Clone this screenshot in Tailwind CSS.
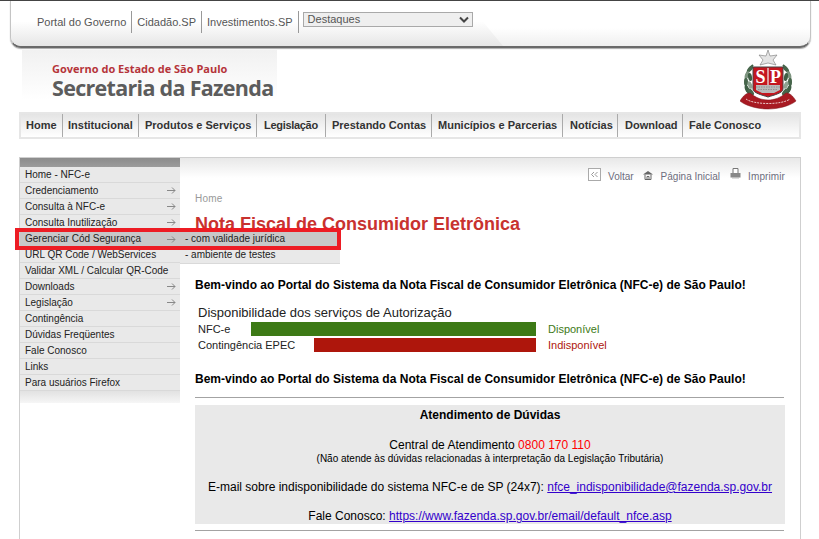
<!DOCTYPE html>
<html lang="pt-BR">
  <head>
    <meta charset="UTF-8" />
    <title>Nota Fiscal de Consumidor Eletrônica</title>
    <script src="https://cdn.jsdelivr.net/npm/@tailwindcss/browser@4"></script>
  </head>
  <body class="bg-white font-['Liberation_Sans',Arial,sans-serif] text-[10px] text-black">
    <div class="relative w-[819px] h-[539px] overflow-hidden border-t border-[#444]">
      <!-- Top bar -->
      <div class="relative ml-[10px] w-[801px] h-[47px] rounded-b-[11px] border-x border-[#c4c4c4] border-b-2 border-b-[#6a6a6a] shadow-[0_1px_1px_#aaa] bg-gradient-to-b from-white from-60% to-[#efefef] whitespace-nowrap">
        <!-- darker wedge behind the links -->
        <div class="absolute inset-y-0 left-0 w-[495px] rounded-bl-[10px] bg-gradient-to-b from-white from-45% to-[#e6e6e6] [clip-path:polygon(0_0,455px_0,492px_100%,0_100%)]"></div>
        <div class="relative flex items-start pl-[26px] pt-[10px]">
          <a class="h-[22px] leading-[22px] pr-[5px] text-[11px] text-[#555] border-r border-[#999]">Portal do Governo</a>
          <a class="h-[22px] leading-[22px] px-[5px] text-[11px] text-[#555] border-r border-[#999]">Cidadão.SP</a>
          <a class="h-[22px] leading-[22px] px-[5px] text-[11px] text-[#555] border-r border-[#999]">Investimentos.SP</a>
          <div class="ml-[4px] mt-[1px] w-[170px] h-[15px] flex items-center justify-between pl-[4px] pr-[3px] border border-[#a9a9a9] bg-[#efefef] text-[#555] text-[11px]">
            <span>Destaques</span>
            <svg class="w-[10px] h-[7px]" viewBox="0 0 10 7"><path d="M1 1.5 L5 5.5 L9 1.5" fill="none" stroke="#444" stroke-width="2"/></svg>
          </div>
        </div>
      </div>

      <!-- Logo row -->
      <div class="flex justify-between h-[64px] pl-[22px] pr-[21px]">
        <div class="w-[255px] h-[50px] mt-[2px] pl-[30px] pt-[12px] bg-gradient-to-b from-[#f1f1f1] to-white font-['Open_Sans',sans-serif] whitespace-nowrap">
          <div class="text-[11px] leading-[13px] font-bold text-[#b5343a]">Governo do Estado de São Paulo</div>
          <div class="text-[21.5px] leading-[25px] font-bold text-[#5c5c5c] tracking-[-0.7px]">Secretaria da Fazenda</div>
        </div>
        <!-- Brasão -->
        <svg class="w-[58px] h-[60px] mt-[2px]" viewBox="0 0 58 60">
          <path d="M28 0L30 6L37 5L33 10L36 15L28 13L20 15L23 10L19 5L26 6Z" fill="#e4e4e4" stroke="#777" stroke-width="0.6"/>
          <g id="wreath">
            <path d="M13 15C5 22 3 34 9 44" fill="none" stroke="#3f5f45" stroke-width="2"/>
            <ellipse cx="10" cy="19" rx="4" ry="2" transform="rotate(-50 10 19)" fill="#47664c"/>
            <ellipse cx="7" cy="25" rx="4" ry="2" transform="rotate(-70 7 25)" fill="#7d947f"/>
            <ellipse cx="10" cy="27" rx="4" ry="2" transform="rotate(-100 10 27)" fill="#3f5f45"/>
            <ellipse cx="6" cy="32" rx="4" ry="2" transform="rotate(-90 6 32)" fill="#47664c"/>
            <ellipse cx="10" cy="35" rx="4" ry="2" transform="rotate(-110 10 35)" fill="#8fa391"/>
            <ellipse cx="7" cy="39" rx="4" ry="2" transform="rotate(70 7 39)" fill="#3f5f45"/>
            <ellipse cx="11" cy="42" rx="4" ry="2" transform="rotate(50 11 42)" fill="#47664c"/>
          </g>
          <g transform="translate(56 0) scale(-1 1)">
            <path d="M13 15C5 22 3 34 9 44" fill="none" stroke="#3f5f45" stroke-width="2"/>
            <ellipse cx="10" cy="19" rx="4" ry="2" transform="rotate(-50 10 19)" fill="#47664c"/>
            <ellipse cx="7" cy="25" rx="4" ry="2" transform="rotate(-70 7 25)" fill="#7d947f"/>
            <ellipse cx="10" cy="27" rx="4" ry="2" transform="rotate(-100 10 27)" fill="#3f5f45"/>
            <ellipse cx="6" cy="32" rx="4" ry="2" transform="rotate(-90 6 32)" fill="#47664c"/>
            <ellipse cx="10" cy="35" rx="4" ry="2" transform="rotate(-110 10 35)" fill="#8fa391"/>
            <ellipse cx="7" cy="39" rx="4" ry="2" transform="rotate(70 7 39)" fill="#3f5f45"/>
            <ellipse cx="11" cy="42" rx="4" ry="2" transform="rotate(50 11 42)" fill="#47664c"/>
          </g>
          <path d="M13 17H43V39C43 43 34 45 28 47C22 45 13 43 13 39Z" fill="#c4161f" stroke="#444" stroke-width="1"/>
          <rect x="27.4" y="18" width="1.2" height="25" fill="#eee"/>
          <text x="20.5" y="33" text-anchor="middle" font-family="Liberation Serif" font-weight="700" font-size="18" fill="#fff">S</text>
          <text x="35.5" y="33" text-anchor="middle" font-family="Liberation Serif" font-weight="700" font-size="18" fill="#fff">P</text>
          <path d="M16 35H40V40L34 43H22L16 40Z" fill="#b9b9b9"/>
          <path d="M16 37H40M18 39.5H38" stroke="#777" stroke-width="0.6" stroke-dasharray="1.5 1"/>
          <path d="M0 51C3 46 6 43 10 43C16 48 22 50 28 50C34 50 40 48 46 43C50 43 53 46 56 51C50 56 38 59 28 59C18 59 6 56 0 51Z" fill="#a81a22" stroke="#7a1016" stroke-width="0.5"/>
          <path d="M6 49C14 55 42 55 50 49" fill="none" stroke="#eccaca" stroke-width="1" stroke-dasharray="2 1"/>
        </svg>
      </div>

      <!-- Main nav -->
      <nav class="ml-[19px] w-[782px] h-[27px] flex items-center border-2 border-[#e6e6e6] bg-gradient-to-b from-[#e4e4e4] to-white text-[11px] font-bold text-[#333] whitespace-nowrap">
        <a class="w-[42px] h-[23px] leading-[23px] pl-[5px] border-r border-[#aaa]">Home</a>
        <a class="w-[76px] h-[23px] leading-[23px] pl-[5px] border-r border-[#aaa]">Institucional</a>
        <a class="w-[118px] h-[23px] leading-[23px] pl-[6px] border-r border-[#aaa]">Produtos e Serviços</a>
        <a class="w-[69px] h-[23px] leading-[23px] pl-[7px] border-r border-[#aaa] tracking-[-0.3px]">Legislação</a>
        <a class="w-[106px] h-[23px] leading-[23px] pl-[6px] border-r border-[#aaa]">Prestando Contas</a>
        <a class="w-[131px] h-[23px] leading-[23px] pl-[6px] border-r border-[#aaa]">Municípios e Parcerias</a>
        <a class="w-[55px] h-[23px] leading-[23px] pl-[7px] border-r border-[#aaa]">Notícias</a>
        <a class="w-[65px] h-[23px] leading-[23px] pl-[7px] border-r border-[#aaa]">Download</a>
        <a class="pl-[6px] h-[23px] leading-[23px]">Fale Conosco</a>
      </nav>

      <!-- Content box -->
      <div class="mt-[18px] ml-[19px] w-[782px] h-[400px] flex border border-[#cfcfcf]">
        <!-- Side menu -->
        <aside class="w-[160px] shrink-0">
          <div class="h-[9px] bg-gradient-to-b from-[#8c8c8c] to-[#9c9c9c]"></div>
          <ul class="bg-[#e9e9e9] text-[#222] whitespace-nowrap">
            <li class="h-[16px] leading-[16px] pl-[5px] border-b border-[#d9d9d9]">Home - NFC-e</li>
            <li class="h-[16px] leading-[16px] pl-[5px] pr-[4px] flex justify-between items-center border-b border-[#d9d9d9]">Credenciamento<svg class="w-[9px] h-[9px]" viewBox="0 0 9 9"><path d="M0 4.5H8M5 1.5L8 4.5L5 7.5" fill="none" stroke="#888"/></svg></li>
            <li class="h-[16px] leading-[16px] pl-[5px] pr-[4px] flex justify-between items-center border-b border-[#d9d9d9]">Consulta à NFC-e<svg class="w-[9px] h-[9px]" viewBox="0 0 9 9"><path d="M0 4.5H8M5 1.5L8 4.5L5 7.5" fill="none" stroke="#888"/></svg></li>
            <li class="h-[16px] leading-[16px] pl-[5px] pr-[4px] flex justify-between items-center border-b border-[#d9d9d9]">Consulta Inutilização<svg class="w-[9px] h-[9px]" viewBox="0 0 9 9"><path d="M0 4.5H8M5 1.5L8 4.5L5 7.5" fill="none" stroke="#888"/></svg></li>
            <li class="h-[16px] leading-[16px] pl-[5px] pr-[4px] flex justify-between items-center bg-[#c8c8c8]">Gerenciar Cód Segurança<svg class="w-[9px] h-[9px]" viewBox="0 0 9 9"><path d="M0 4.5H8M5 1.5L8 4.5L5 7.5" fill="none" stroke="#888"/></svg></li>
            <li class="h-[16px] leading-[16px] pl-[5px] border-b border-[#d9d9d9]">URL QR Code / WebServices</li>
            <li class="h-[16px] leading-[16px] pl-[5px] border-b border-[#d9d9d9]">Validar XML / Calcular QR-Code</li>
            <li class="h-[16px] leading-[16px] pl-[5px] pr-[4px] flex justify-between items-center border-b border-[#d9d9d9]">Downloads<svg class="w-[9px] h-[9px]" viewBox="0 0 9 9"><path d="M0 4.5H8M5 1.5L8 4.5L5 7.5" fill="none" stroke="#888"/></svg></li>
            <li class="h-[16px] leading-[16px] pl-[5px] pr-[4px] flex justify-between items-center border-b border-[#d9d9d9]">Legislação<svg class="w-[9px] h-[9px]" viewBox="0 0 9 9"><path d="M0 4.5H8M5 1.5L8 4.5L5 7.5" fill="none" stroke="#888"/></svg></li>
            <li class="h-[16px] leading-[16px] pl-[5px] border-b border-[#d9d9d9]">Contingência</li>
            <li class="h-[16px] leading-[16px] pl-[5px] border-b border-[#d9d9d9]">Dúvidas Freqüentes</li>
            <li class="h-[16px] leading-[16px] pl-[5px] border-b border-[#d9d9d9]">Fale Conosco</li>
            <li class="h-[16px] leading-[16px] pl-[5px] border-b border-[#d9d9d9]">Links</li>
            <li class="h-[16px] leading-[16px] pl-[5px] border-b border-[#d9d9d9]">Para usuários Firefox</li>
          </ul>
          <div class="h-[12px] bg-gradient-to-b from-[#e2e2e2] to-[#f6f6f6]"></div>
        </aside>

        <!-- Main column -->
        <main class="flex-1 min-w-0">
          <div class="h-[20px] bg-gradient-to-b from-[#e8e8e8] to-white"></div>
          <div class="-mt-[10px] -mb-[1px] h-[16px] flex items-center justify-end pr-[15px] text-[10px] text-[#6d6d7d]">
            <svg class="w-[13px] h-[13px] -mt-[4px]" viewBox="0 0 13 13"><rect x="0.5" y="0.5" width="12" height="12" fill="#fff" stroke="#aaa"/><path d="M6 4L3.5 6.5L6 9M9.5 4L7 6.5L9.5 9" fill="none" stroke="#999"/></svg>
            <span class="ml-[7px]">Voltar</span>
            <svg class="ml-[9px] w-[10px] h-[10px] -mt-[2px]" viewBox="0 0 10 10"><path d="M0 4.5L5 1L10 4.5Z" fill="#666"/><path d="M2 4.5V9.5H8V4.5M4 9.5V6.5H6V9.5" fill="none" stroke="#666"/></svg>
            <span class="ml-[8px]">Página Inicial</span>
            <svg class="ml-[10px] w-[11px] h-[11px] -mt-[5px]" viewBox="0 0 11 11"><path d="M3 5V0.5H8V5" fill="#fff" stroke="#777"/><rect x="0.5" y="5" width="10" height="4.5" fill="#888"/><rect x="2" y="9" width="7" height="1.5" fill="#bbb"/></svg>
            <span class="ml-[7px] tracking-[0.1px]">Imprimir</span>
          </div>

          <div class="pl-[15px] pr-[15px]">
            <p class="mt-[9px] leading-[13px] text-[10px] tracking-[0.2px] text-[#999]">Home</p>
            <h1 class="mt-[7px] text-[18px] leading-[24px] font-bold text-[#c8322f]">Nota Fiscal de Consumidor Eletrônica</h1>
            <p class="mt-[42px] text-[12px] leading-[14px] font-bold text-black">Bem-vindo ao Portal do Sistema da Nota Fiscal de Consumidor Eletrônica (NFC-e) de São Paulo!</p>

            <div class="mt-[13px] pl-[3px] text-[11px] text-[#222]">
              <p class="text-[13px] leading-[15px] text-[#222]">Disponibilidade dos serviços de Autorização</p>
              <div class="mt-[1px] flex items-center h-[16px]">
                <span class="w-[53px] shrink-0">NFC-e</span>
                <span class="w-[285px] h-[14px] bg-[#3d7a16]"></span>
                <span class="ml-[12px] text-[#3d7a16]">Disponível</span>
              </div>
              <div class="flex items-center h-[16px]">
                <span class="w-[116px] shrink-0">Contingência EPEC</span>
                <span class="w-[222px] h-[14px] bg-[#ae160c]"></span>
                <span class="ml-[12px] text-[#ae160c]">Indisponível</span>
              </div>
            </div>

            <p class="mt-[19px] text-[12px] leading-[14px] font-bold text-black">Bem-vindo ao Portal do Sistema da Nota Fiscal de Consumidor Eletrônica (NFC-e) de São Paulo!</p>
            <div class="mt-[11px] h-[1px] w-[589px] bg-[#a3a3a3]"></div>

            <div class="mt-[7px] w-[590px] h-[119px] bg-[#e9e9e9] text-center text-[12px] text-black">
              <p class="pt-[3px] leading-[14px] font-bold">Atendimento de Dúvidas</p>
              <p class="mt-[16px] leading-[14px]">Central de Atendimento <span class="text-[#f00]">0800 170 110</span></p>
              <p class="text-[10px] leading-[13px]">(Não atende às dúvidas relacionadas à interpretação da Legislação Tributária)</p>
              <p class="mt-[15px] leading-[14px]">E-mail sobre indisponibilidade do sistema NFC-e de SP (24x7): <a class="text-[#3300cc] underline">nfce_indisponibilidade@fazenda.sp.gov.br</a></p>
              <p class="mt-[15px] leading-[14px]">Fale Conosco: <a class="text-[#3300cc] underline">https://www.fazenda.sp.gov.br/email/default_nfce.asp</a></p>
            </div>
            <div class="mt-[6px] h-[1px] w-[589px] bg-[#a3a3a3]"></div>
          </div>
        </main>
      </div>

      <!-- Open submenu over the content -->
      <div class="absolute left-[180px] top-[230px] w-[160px] bg-[#e9e9e9] text-[#222] border-b border-[#d9d9d9]">
        <div class="h-[16px] leading-[16px] pl-[5px] bg-[#c8c8c8]">- com validade jurídica</div>
        <div class="h-[16px] leading-[16px] pl-[5px]">- ambiente de testes</div>
      </div>
      <!-- Red highlight -->
      <div class="absolute left-[15px] top-[227px] w-[326px] h-[22px] border-[4px] border-[#ed1c24]"></div>
    </div>
  </body>
</html>
